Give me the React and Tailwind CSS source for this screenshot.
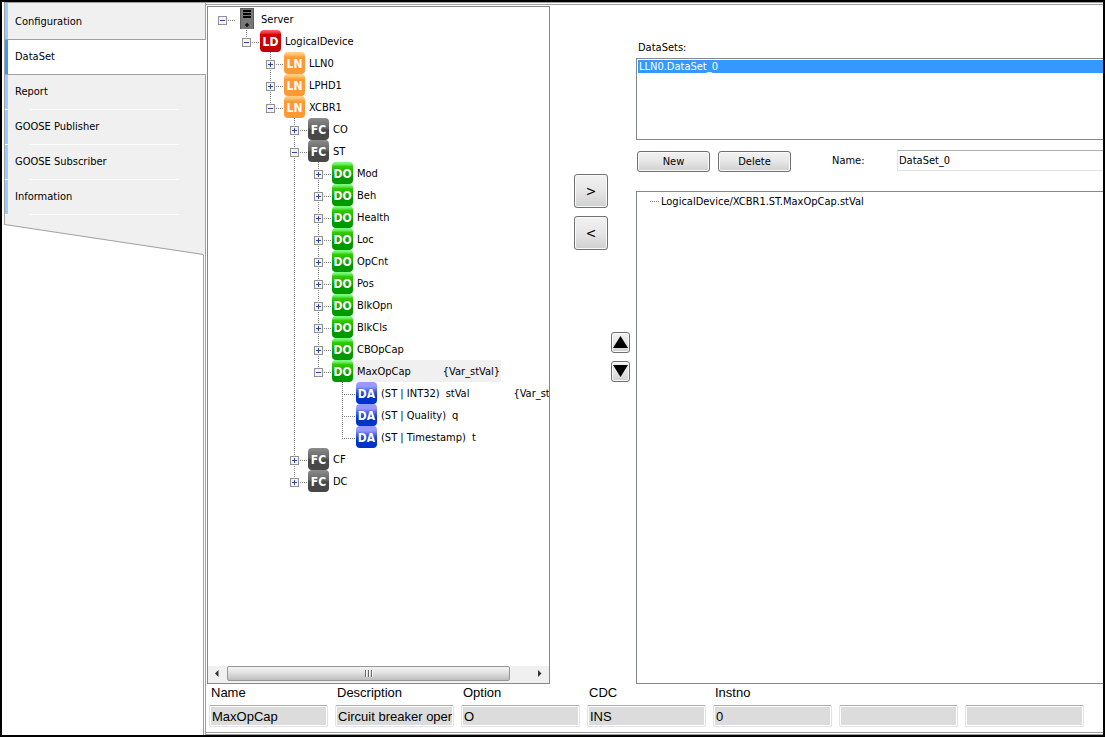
import { useState } from 'react'

const TABS = ['Configuration', 'DataSet', 'Report', 'GOOSE Publisher', 'GOOSE Subscriber', 'Information']

const TREE = {
  type: 'SERVER',
  label: 'Server',
  children: [
    {
      type: 'LD',
      label: 'LogicalDevice',
      children: [
        { type: 'LN', label: 'LLN0', closed: true },
        { type: 'LN', label: 'LPHD1', closed: true },
        {
          type: 'LN',
          label: 'XCBR1',
          children: [
            { type: 'FC', label: 'CO', closed: true },
            {
              type: 'FC',
              label: 'ST',
              children: [
                { type: 'DO', label: 'Mod', closed: true },
                { type: 'DO', label: 'Beh', closed: true },
                { type: 'DO', label: 'Health', closed: true },
                { type: 'DO', label: 'Loc', closed: true },
                { type: 'DO', label: 'OpCnt', closed: true },
                { type: 'DO', label: 'Pos', closed: true },
                { type: 'DO', label: 'BlkOpn', closed: true },
                { type: 'DO', label: 'BlkCls', closed: true },
                { type: 'DO', label: 'CBOpCap', closed: true },
                {
                  type: 'DO',
                  label: 'MaxOpCap',
                  variable: '{Var_stVal}',
                  selected: true,
                  children: [
                    { type: 'DA', prefix: '(ST | INT32)', label: 'stVal', variable: '{Var_stVal}' },
                    { type: 'DA', prefix: '(ST | Quality)', label: 'q' },
                    { type: 'DA', prefix: '(ST | Timestamp)', label: 't' },
                  ],
                },
              ],
            },
            { type: 'FC', label: 'CF', closed: true },
            { type: 'FC', label: 'DC', closed: true },
          ],
        },
      ],
    },
  ],
}

const FIELDS = [
  { id: 'name', label: 'Name', value: 'MaxOpCap' },
  { id: 'description', label: 'Description', value: 'Circuit breaker oper' },
  { id: 'option', label: 'Option', value: 'O' },
  { id: 'cdc', label: 'CDC', value: 'INS' },
  { id: 'instno', label: 'Instno', value: '0' },
  { id: 'extra1', label: '', value: '' },
  { id: 'extra2', label: '', value: '' },
]

const BADGES = {
  LD: 'from-[#ff6666] from-0% via-[#d60000] via-20% to-[#bb0000]',
  LN: 'from-[#ffd080] from-5% via-[#ff9933] via-25% to-[#ff9933]',
  FC: 'from-[#8c8c8c] from-0% via-[#666666] via-45% to-[#484848] to-55%',
  DO: 'from-[#77ff77] from-5% via-[#33cc00] via-20% to-[#009900] to-65%',
  DA: 'from-[#9999ff] from-20% via-[#3355dd] via-45% to-[#0033cc] to-65%',
}

const BUTTON =
  'rounded-[3px] border border-[#707070] bg-linear-to-b from-[#f2f2f2] from-0% via-[#e6e6e6] via-50% to-[#cfcfcf] shadow-[inset_0_0_0_1px_#fafafa]'

function NodeIcon({ type }) {
  if (type === 'SERVER') {
    return (
      <svg className="h-[22px] w-[21px] shrink-0" viewBox="0 0 21 22" aria-hidden="true">
        <rect x="4" y="0" width="14" height="21" fill="#777" />
        <path d="M4.5 21V.5H17.5V21" fill="none" stroke="#5c5c5c" />
        <path d="M7 3h8M7 6h8M7 9h8" stroke="#000" strokeWidth="2" />
        <path d="M11 15v4M9 17h4" stroke="#111" strokeWidth="1.5" />
      </svg>
    )
  }
  return (
    <span
      className={`flex h-[22px] w-[21px] shrink-0 items-center justify-center rounded-[4px] bg-linear-to-b pt-px font-['DejaVu_Sans_Condensed','DejaVu_Sans',sans-serif] text-[12px] leading-none font-bold text-white ${BADGES[type]}`}
    >
      {type}
    </span>
  )
}

// One 24px column of connector lines to the left of a node
function Guide({ up, down, across, box }) {
  return (
    <svg className="h-[22px] w-6 shrink-0" viewBox="0 0 24 22" shapeRendering="crispEdges" aria-hidden="true">
      <g stroke="#808080" strokeDasharray="1 1" fill="none">
        {up && <path d="M10.5 0V12" />}
        {down && <path d="M10.5 12V22" />}
        {across && <path d="M10 12.5H24" />}
      </g>
      {box && (
        <>
          <rect x="6.5" y="8.5" width="8" height="8" fill="#f4f4f4" stroke="#919191" />
          <path d={box === 'plus' ? 'M8 12.5h5M10.5 10v5' : 'M8 12.5h5'} stroke="#2b4a9b" />
        </>
      )}
    </svg>
  )
}

function TreeNode({ node, rails = [], last = true, root = false }) {
  const [open, setOpen] = useState(!node.closed)
  const children = node.children || []
  const leaf = !node.closed && children.length === 0
  const box = leaf ? null : open ? 'minus' : 'plus'

  return (
    <li>
      <div className="flex h-[22px]">
        {rails.map((on, i) => (
          <Guide key={i} up={on} down={on} />
        ))}
        {leaf ? (
          <Guide up down={!last} across />
        ) : (
          <button aria-label={`Toggle ${node.label}`} onClick={() => setOpen(!open)}>
            <Guide up={!root} down={!last} across box={box} />
          </button>
        )}
        <NodeIcon type={node.type} />
        <span className={`flex h-[22px] items-center pt-px pl-1 whitespace-pre ${node.selected ? 'bg-[#f0f0f0] pr-px' : ''}`}>
          {node.prefix && <span className="pr-1.5">{node.prefix}</span>}
          {node.label}
          {node.variable && <span className={node.selected ? 'pl-8' : 'pl-11'}>{node.variable}</span>}
        </span>
      </div>
      {open && children.length > 0 && (
        <ul>
          {children.map((child, i) => (
            <TreeNode
              key={child.label}
              node={child}
              rails={root ? [false] : [...rails, !last]}
              last={i === children.length - 1}
            />
          ))}
        </ul>
      )}
    </li>
  )
}

function Sidebar({ active, onSelect }) {
  return (
    <nav className="flex w-[204px] shrink-0 flex-col pl-0.5">
      {TABS.map((tab) => (
        <button
          key={tab}
          onClick={() => onSelect(tab)}
          className={`flex flex-col border-l border-l-[#a0a0a0] text-left ${
            tab === active ? 'bg-white' : 'border-r border-r-[#a0a0a0] bg-[#f0f0f0]'
          } ${tab === active || tab === 'Configuration' ? 'border-b border-b-[#a0a0a0]' : ''} ${
            tab === 'Configuration' ? 'h-[38px] border-t border-t-[#a0a0a0]' : 'h-[35px]'
          }`}
        >
          <span
            className={`flex w-full flex-1 items-center border-l-3 pl-[7px] ${
              tab === active ? 'border-[#3399ff]' : 'border-[#99ccff]'
            } ${tab === 'Configuration' ? '' : 'pb-0.5'}`}
          >
            {tab}
          </span>
          {tab !== active && tab !== 'Configuration' && (
            <span className="flex w-full">
              <span className="h-px w-[3px] bg-white" />
              <span className="ml-[22px] h-px w-[149px] bg-white" />
            </span>
          )}
        </button>
      ))}
      <svg className="h-10 w-full" viewBox="0 0 202 40" aria-hidden="true">
        <path d="M0 0H201V40H199.5L.5 9.5Z" fill="#f0f0f0" />
        <path d="M.5 0V9.5L199.5 39.5M201.5 0V40" fill="none" stroke="#a0a0a0" />
      </svg>
      <div className="flex-1 border-r-3 border-double border-[#a0a0a0]" />
    </nav>
  )
}

function ScrollBar() {
  return (
    <div className="flex h-[17px] shrink-0 items-start bg-[#f0f0f0]" aria-hidden="true">
      <svg className="h-[15px] w-[19px]" viewBox="0 0 19 15">
        <path d="M10.5 4v7L7 7.5z" fill="#333" />
      </svg>
      <div className="flex h-[15px] flex-1 items-center justify-center gap-px rounded-[2px] border border-[#979797] bg-linear-to-b from-[#f5f5f5] via-[#dedede] to-[#bdbdbd]">
        <span className="h-[7px] w-0.5 border-r border-white bg-[#666]" />
        <span className="h-[7px] w-0.5 border-r border-white bg-[#666]" />
        <span className="h-[7px] w-0.5 border-r border-white bg-[#666]" />
      </div>
      <svg className="ml-5 h-[15px] w-[19px]" viewBox="0 0 19 15">
        <path d="M8 4v7l3.5-3.5z" fill="#333" />
      </svg>
    </div>
  )
}

export default function App() {
  const [active, setActive] = useState('DataSet')
  const [dataSetName, setDataSetName] = useState('DataSet_0')

  return (
    <div className="flex min-h-screen border-2 border-black bg-white font-['DejaVu_Sans_Condensed','DejaVu_Sans',sans-serif] text-[11px] leading-[13px] text-black">
      <Sidebar active={active} onSelect={setActive} />

      <main className="flex min-w-0 flex-1 flex-col border-y-3 border-double border-[#a0a0a0]">
        <div className="flex flex-1 pt-px">
          {/* Server tree */}
          <section className="ml-px flex w-[343px] shrink-0 flex-col border border-[#828790]">
            <ul className="flex-1 overflow-hidden pt-px pl-1">
              <TreeNode node={TREE} root />
            </ul>
            <ScrollBar />
          </section>

          {/* Move buttons */}
          <div className="flex w-[86px] shrink-0 flex-col pt-[168px] pr-[6px] pl-6">
            <button aria-label="Add" className={`mb-2 size-[34px] text-[14px] ${BUTTON}`}>
              &gt;
            </button>
            <button aria-label="Remove" className={`size-[34px] text-[14px] ${BUTTON}`}>
              &lt;
            </button>
            <div className="mt-[82px] flex flex-col gap-2 self-end">
              <button aria-label="Move up" className={`flex h-[21px] w-[19px] items-center justify-center pb-0.5 ${BUTTON}`}>
                <svg className="h-3 w-[15px]" viewBox="0 0 15 12">
                  <path d="M7.5 0L15 12H0z" />
                </svg>
              </button>
              <button aria-label="Move down" className={`flex h-[21px] w-[19px] items-center justify-center pb-0.5 ${BUTTON}`}>
                <svg className="h-3 w-[15px]" viewBox="0 0 15 12">
                  <path d="M7.5 12L15 0H0z" />
                </svg>
              </button>
            </div>
          </div>

          {/* Data sets */}
          <section className="flex min-w-0 flex-1 flex-col">
            <h2 className="pt-[35px] pb-1 pl-0.5">DataSets:</h2>
            <ul className="h-[82px] border-y border-l border-[#828790] py-px pl-px">
              <li className="bg-[#3399ff] pl-px text-white">LLN0.DataSet_0</li>
            </ul>
            <div className="flex items-start pt-[10px] pl-px">
              <button className={`mt-px h-[21px] w-[73px] ${BUTTON}`}>New</button>
              <button className={`mt-px ml-2 h-[21px] w-[73px] ${BUTTON}`}>Delete</button>
              <label htmlFor="dataset-name" className="ml-[41px] w-[65px] pt-1">
                Name:
              </label>
              <input
                id="dataset-name"
                value={dataSetName}
                onChange={(e) => setDataSetName(e.target.value)}
                className="h-[21px] min-w-0 flex-1 border-y border-l border-[#e2e3ea] border-t-[#abadb3] pl-px outline-none"
              />
            </div>
            <ul className="mt-[19px] flex-1 border-y border-l border-[#828790] pt-[3px] pl-[13px]">
              <li className="flex items-center gap-0.5">
                <span className="w-[9px] border-t border-dotted border-[#808080]" />
                LogicalDevice/XCBR1.ST.MaxOpCap.stVal
              </li>
            </ul>
          </section>
        </div>

        {/* Selected node details */}
        <div className="flex gap-[7px] pt-px pb-[5px] pl-[3px] font-['Liberation_Sans',sans-serif] text-[13px] leading-4">
          {FIELDS.map((field) => (
            <div key={field.id} className="flex w-[119px] flex-col">
              <label htmlFor={field.id} className="h-5 pl-0.5">
                {field.label}
              </label>
              <input
                id={field.id}
                aria-label={field.label || 'Attribute'}
                value={field.value}
                readOnly
                className="h-[22px] rounded-[2px] border border-[#e2e3ea] border-t-[#abadb3] bg-[#dcdcdc] pl-0.5 shadow-[inset_0_0_0_1px_#fff] outline-none"
              />
            </div>
          ))}
        </div>
      </main>
    </div>
  )
}
